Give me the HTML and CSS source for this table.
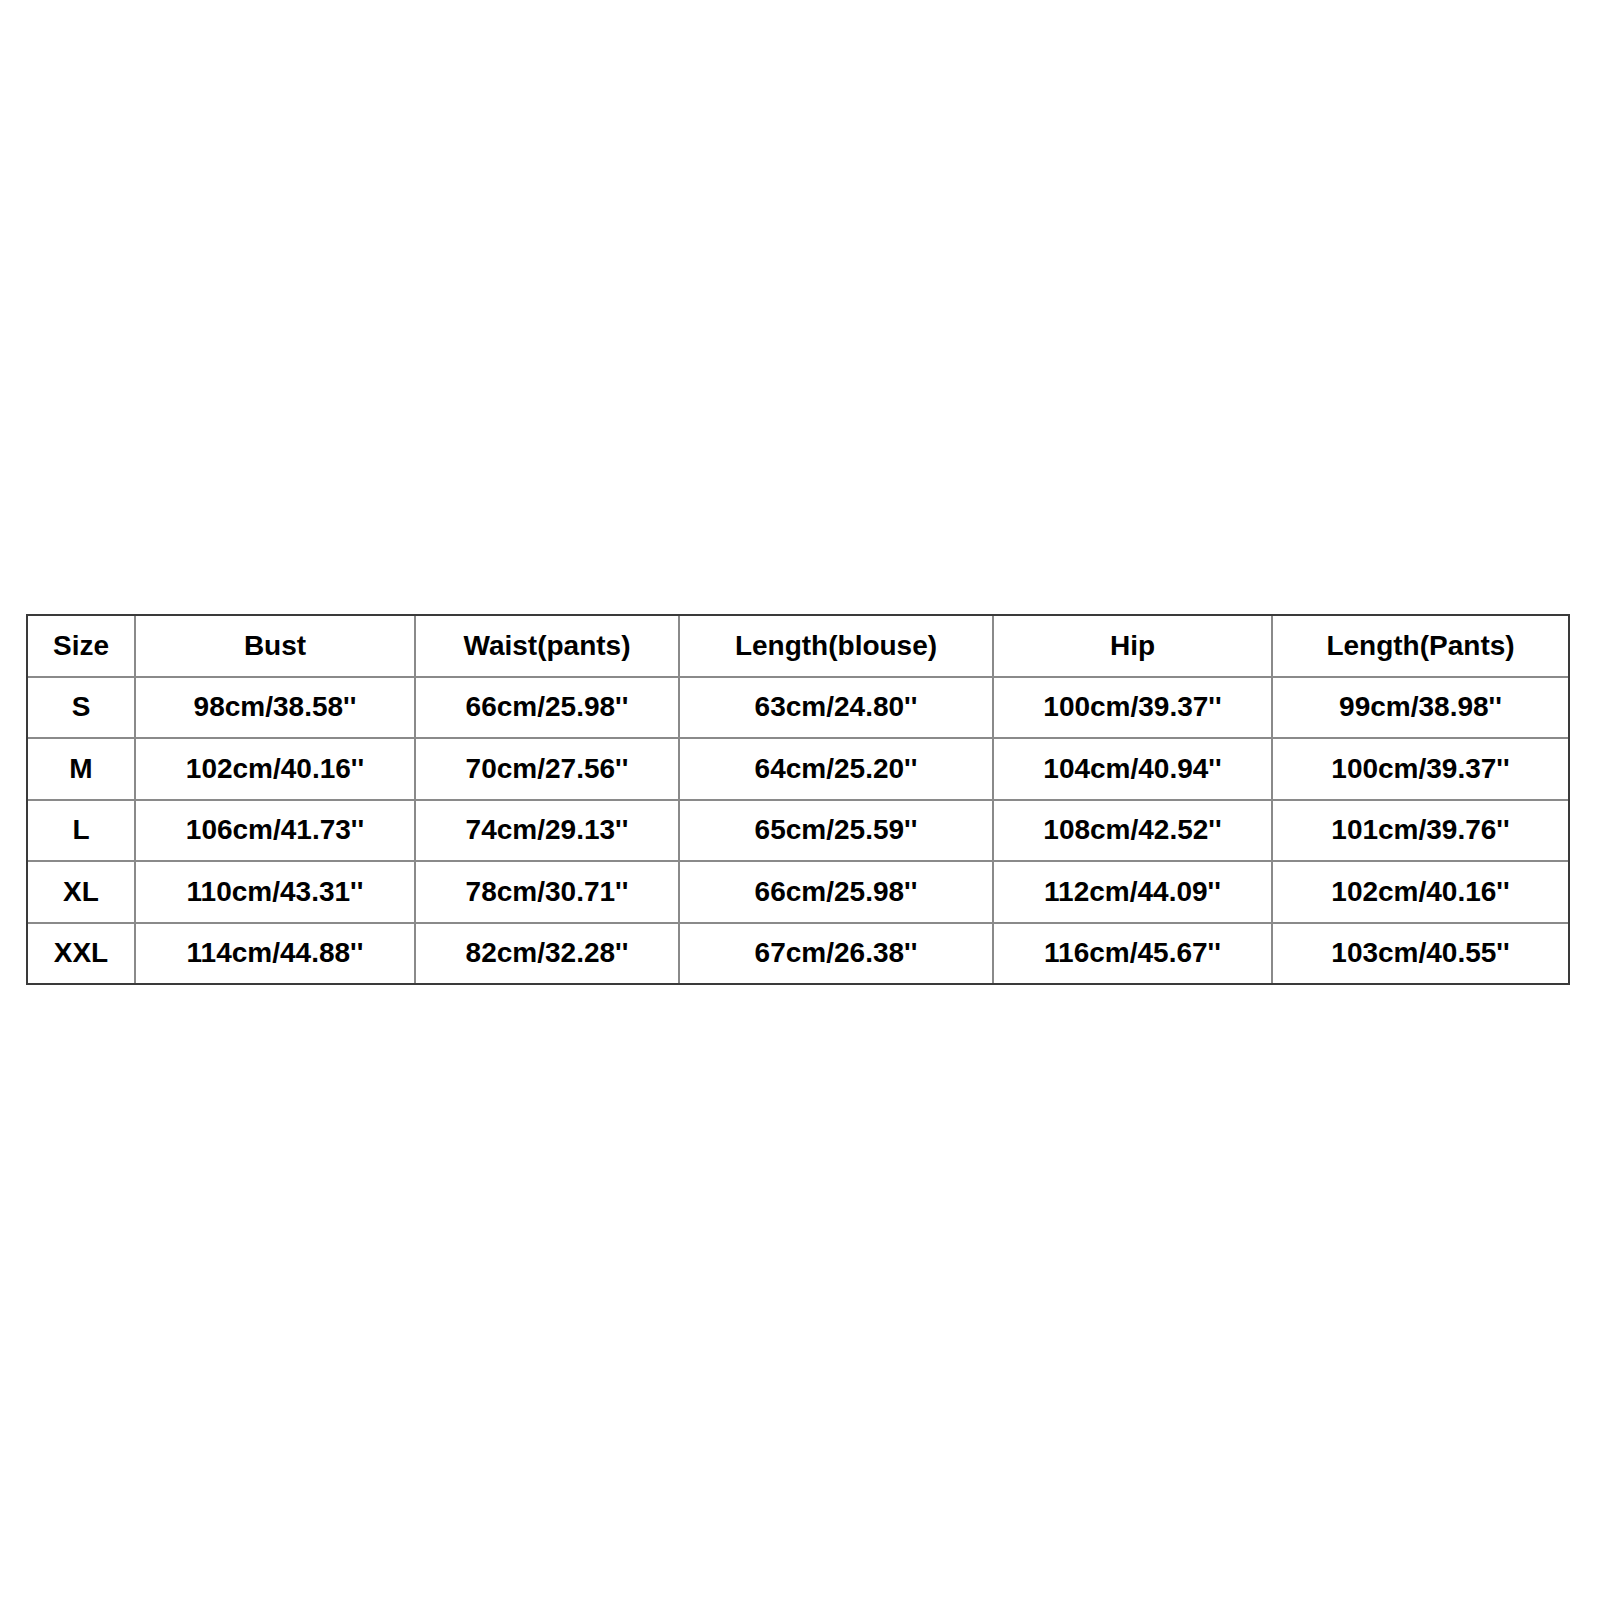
FILE: index.html
```html
<!DOCTYPE html>
<html>
<head>
<meta charset="utf-8">
<link rel="stylesheet" href="styles.css">
</head>
<body>
<div class="page">
<table class="sizes">
<colgroup>
<col class="c1"><col class="c2"><col class="c3"><col class="c4"><col class="c5"><col class="c6">
</colgroup>
<tr><td>Size</td><td>Bust</td><td>Waist(pants)</td><td>Length(blouse)</td><td>Hip</td><td>Length(Pants)</td></tr>
<tr><td>S</td><td>98cm/38.58''</td><td>66cm/25.98''</td><td>63cm/24.80''</td><td>100cm/39.37''</td><td>99cm/38.98''</td></tr>
<tr><td>M</td><td>102cm/40.16''</td><td>70cm/27.56''</td><td>64cm/25.20''</td><td>104cm/40.94''</td><td>100cm/39.37''</td></tr>
<tr><td>L</td><td>106cm/41.73''</td><td>74cm/29.13''</td><td>65cm/25.59''</td><td>108cm/42.52''</td><td>101cm/39.76''</td></tr>
<tr><td>XL</td><td>110cm/43.31''</td><td>78cm/30.71''</td><td>66cm/25.98''</td><td>112cm/44.09''</td><td>102cm/40.16''</td></tr>
<tr><td>XXL</td><td>114cm/44.88''</td><td>82cm/32.28''</td><td>67cm/26.38''</td><td>116cm/45.67''</td><td>103cm/40.55''</td></tr>
</table>
</div>
</body>
</html>
```

FILE: styles.css
```css
html, body {
  margin: 0;
  padding: 0;
  background: #ffffff;
}
.page {
  width: 1600px;
  height: 1600px;
  padding: 614px 0 0 26px;
  box-sizing: border-box;
}
.sizes {
  width: 1544px;
  table-layout: fixed;
  border-collapse: separate;
  border-spacing: 0;
  border: 2px solid #3a3a3a;
  font-family: "Liberation Sans", Arial, sans-serif;
  font-weight: bold;
  font-size: 28px;
  color: #000;
}
.c1 { width: 108px; }
.c2 { width: 280px; }
.c3 { width: 264px; }
.c4 { width: 314px; }
.c5 { width: 279px; }
.c6 { width: auto; }
.sizes td {
  height: 59.5px;
  padding: 0;
  text-align: center;
  vertical-align: middle;
  border-right: 2px solid #8a8a8a;
  border-bottom: 2px solid #8a8a8a;
  white-space: nowrap;
}
.sizes td:last-child { border-right: none; }
.sizes tr:last-child td { border-bottom: none; }
```
